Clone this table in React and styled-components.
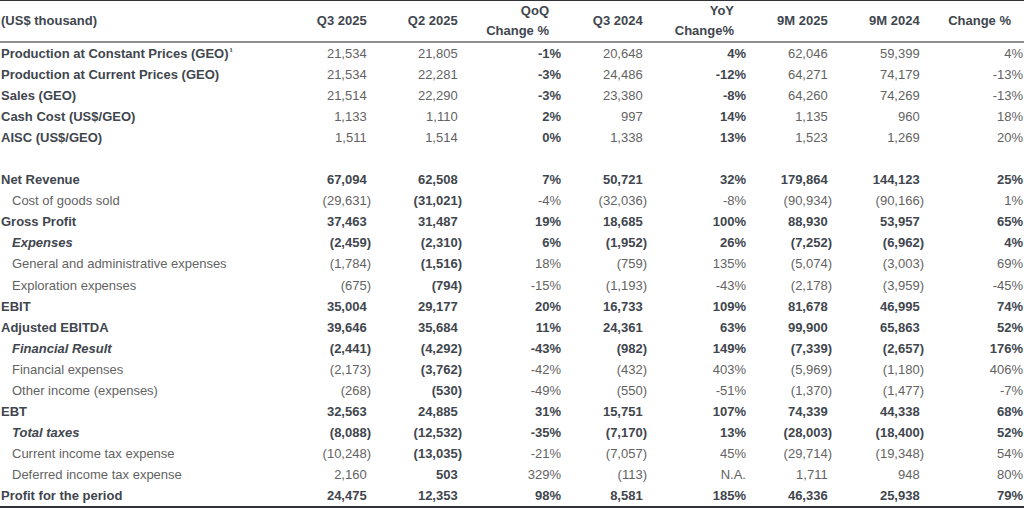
import React from 'react';
import styled, { createGlobalStyle } from 'styled-components';

const GlobalStyle = createGlobalStyle`
  html, body { margin: 0; padding: 0; background: #fff; }
  body { font-family: "Liberation Sans", Arial, sans-serif; }
`;

const DARK = '#41464e';
const GREY = '#636363';

// money columns get a ")"-wide gap so figures line up with bracketed ones
const COLS = [
  { title: 'Q3 2025', w: 71, money: true },
  { title: 'Q2 2025', w: 91, money: true },
  { title: ['QoQ', 'Change %'], w: 99 },
  { title: 'Q3 2024', w: 86, money: true },
  { title: ['YoY', 'Change%'], w: 99 },
  { title: '9M 2025', w: 86, money: true },
  { title: '9M 2024', w: 92, money: true },
  { title: 'Change %', w: 100 },
];

const ROWS = [
  { kind: 'metric', label: 'Production at Constant Prices (GEO)', sup: '¹', v: ['21,534', '21,805', '-1%', '20,648', '4%', '62,046', '59,399', '4%'] },
  { kind: 'metric', label: 'Production at Current Prices (GEO)', v: ['21,534', '22,281', '-3%', '24,486', '-12%', '64,271', '74,179', '-13%'] },
  { kind: 'metric', label: 'Sales (GEO)', v: ['21,514', '22,290', '-3%', '23,380', '-8%', '64,260', '74,269', '-13%'] },
  { kind: 'metric', label: 'Cash Cost (US$/GEO)', v: ['1,133', '1,110', '2%', '997', '14%', '1,135', '960', '18%'] },
  { kind: 'metric', label: 'AISC (US$/GEO)', v: ['1,511', '1,514', '0%', '1,338', '13%', '1,523', '1,269', '20%'] },
  { kind: 'blank' },
  { kind: 'total', label: 'Net Revenue', v: ['67,094', '62,508', '7%', '50,721', '32%', '179,864', '144,123', '25%'] },
  { kind: 'item', label: 'Cost of goods sold', v: ['(29,631)', '(31,021)', '-4%', '(32,036)', '-8%', '(90,934)', '(90,166)', '1%'] },
  { kind: 'total', label: 'Gross Profit', v: ['37,463', '31,487', '19%', '18,685', '100%', '88,930', '53,957', '65%'] },
  { kind: 'group', label: 'Expenses', v: ['(2,459)', '(2,310)', '6%', '(1,952)', '26%', '(7,252)', '(6,962)', '4%'] },
  { kind: 'item', label: 'General and administrative expenses', v: ['(1,784)', '(1,516)', '18%', '(759)', '135%', '(5,074)', '(3,003)', '69%'] },
  { kind: 'item', label: 'Exploration expenses', v: ['(675)', '(794)', '-15%', '(1,193)', '-43%', '(2,178)', '(3,959)', '-45%'] },
  { kind: 'total', label: 'EBIT', v: ['35,004', '29,177', '20%', '16,733', '109%', '81,678', '46,995', '74%'] },
  { kind: 'total', label: 'Adjusted EBITDA', v: ['39,646', '35,684', '11%', '24,361', '63%', '99,900', '65,863', '52%'] },
  { kind: 'group', label: 'Financial Result', v: ['(2,441)', '(4,292)', '-43%', '(982)', '149%', '(7,339)', '(2,657)', '176%'] },
  { kind: 'item', label: 'Financial expenses', v: ['(2,173)', '(3,762)', '-42%', '(432)', '403%', '(5,969)', '(1,180)', '406%'] },
  { kind: 'item', label: 'Other income (expenses)', v: ['(268)', '(530)', '-49%', '(550)', '-51%', '(1,370)', '(1,477)', '-7%'] },
  { kind: 'total', label: 'EBT', v: ['32,563', '24,885', '31%', '15,751', '107%', '74,339', '44,338', '68%'] },
  { kind: 'group', label: 'Total taxes', v: ['(8,088)', '(12,532)', '-35%', '(7,170)', '13%', '(28,003)', '(18,400)', '52%'] },
  { kind: 'item', label: 'Current income tax expense', v: ['(10,248)', '(13,035)', '-21%', '(7,057)', '45%', '(29,714)', '(19,348)', '54%'] },
  { kind: 'item', label: 'Deferred income tax expense', v: ['2,160', '503', '329%', '(113)', 'N.A.', '1,711', '948', '80%'] },
  { kind: 'total', label: 'Profit for the period', v: ['24,475', '12,353', '98%', '8,581', '185%', '46,336', '25,938', '79%'] },
];

const isBold = (kind, i) => {
  if (kind === 'total' || kind === 'group') return true;
  if (kind === 'metric') return i === 2 || i === 4;
  if (kind === 'item') return i === 1;
  return false;
};

const Table = styled.table`
  width: 1024px;
  table-layout: fixed;
  border-collapse: separate;
  border-spacing: 0;
  font-size: 13px;
  color: ${GREY};
`;

const HeadCell = styled.th`
  height: 40px;
  padding: 0 ${p => p.$pad}px 0 ${p => (p.$left ? 1 : 0)}px;
  border-top: 1px solid #2f3237;
  border-bottom: 2px solid #8f8f8f;
  text-align: ${p => (p.$left ? 'left' : 'right')};
  font-weight: bold;
  color: ${DARK};
  line-height: 20px;
  vertical-align: middle;
  white-space: nowrap;
`;

const Row = styled.tr`
  height: 21.05px;
  &:last-child td { border-bottom: 2px solid #2f3237; }
`;

const LabelCell = styled.td`
  padding: 0 0 0 ${p => (p.$indent ? 12 : 1)}px;
  font-weight: ${p => (p.$bold ? 'bold' : 'normal')};
  font-style: ${p => (p.$italic ? 'italic' : 'normal')};
  color: ${p => (p.$bold ? DARK : GREY)};
  white-space: nowrap;
  line-height: 21px;
`;

const NumCell = styled.td`
  padding: 0 ${p => (p.$gap ? '0.333em' : '0')} 0 0;
  text-align: right;
  font-weight: ${p => (p.$bold ? 'bold' : 'normal')};
  color: ${p => (p.$bold ? DARK : GREY)};
  white-space: nowrap;
  line-height: 21px;
`;

const Sup = styled.span`
  font-size: 10px;
  vertical-align: 3px;
  line-height: 0;
  margin-left: 1px;
`;

export default function App() {
  return (
    <>
      <GlobalStyle />
      <Table>
        <colgroup>
          <col style={{ width: 300 }} />
          {COLS.map((c, i) => <col key={i} style={{ width: c.w }} />)}
        </colgroup>
        <thead>
          <tr>
            <HeadCell $left $pad={0}>(US$ thousand)</HeadCell>
            {COLS.map((c, i) => (
              <HeadCell key={i} $pad={c.money ? 4.3 : i === 7 ? 13 : 12}>
                {Array.isArray(c.title) ? <>{c.title[0]}<br />{c.title[1]}</> : c.title}
              </HeadCell>
            ))}
          </tr>
        </thead>
        <tbody>
          {ROWS.map((r, ri) => (
            r.kind === 'blank' ? (
              <Row key={ri}><td colSpan={9} /></Row>
            ) : (
              <Row key={ri}>
                <LabelCell
                  $bold={r.kind !== 'item'}
                  $italic={r.kind === 'group'}
                  $indent={r.kind === 'item' || r.kind === 'group'}
                >
                  {r.label}{r.sup && <Sup>{r.sup}</Sup>}
                </LabelCell>
                {r.v.map((v, i) => (
                  <NumCell
                    key={i}
                    $bold={isBold(r.kind, i)}
                    $gap={COLS[i].money && !v.startsWith('(')}
                    style={i === 7 ? { paddingRight: 1 } : undefined}
                  >
                    {v}
                  </NumCell>
                ))}
              </Row>
            )
          ))}
        </tbody>
      </Table>
    </>
  );
}
